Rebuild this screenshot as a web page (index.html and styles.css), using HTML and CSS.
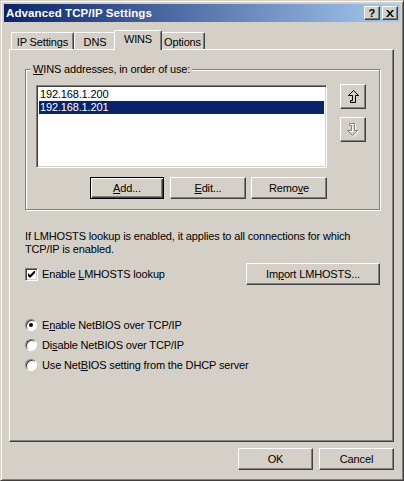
FILE: index.html
```html
<!DOCTYPE html>
<html lang="en">
<head>
  <meta charset="UTF-8" />
  <title>Advanced TCP/IP Settings</title>
  <link rel="stylesheet" href="styles.css">
</head>
<body>
  <div class="window">
    <div class="titlebar">
      <span class="title">Advanced TCP/IP Settings</span>
      <span class="caption-btn help">?</span>
      <span class="caption-btn close">
        <svg width="8" height="7" viewBox="0 0 8 7"><path d="M0 0h2l2 2.5L6 0h2L5 3.5 8 7H6L4 4.5 2 7H0l3-3.5z" fill="#000"/></svg>
      </span>
    </div>

    <div class="dialog">
      <div class="tabs">
        <div class="tab tab-ip">IP Settings</div>
        <div class="tab tab-dns">DNS</div>
        <div class="tab tab-wins active">WINS</div>
        <div class="tab tab-options">Options</div>
      </div>

      <div class="panel">
        <fieldset class="group">
          <legend><u>W</u>INS addresses, in order of use:</legend>
          <div class="group-row">
            <div class="listbox">
              <div class="item">192.168.1.200</div>
              <div class="item selected">192.168.1.201</div>
            </div>
            <div class="arrows">
              <button class="btn arrow">
                <svg width="11" height="13" viewBox="0 0 11 13"><path d="M5.5 0.5L10.5 5.5H7.5V12.5H2.5V10.5H4.5V5.5H0.5Z" fill="none" stroke="#000"/></svg>
              </button>
              <button class="btn arrow" disabled>
                <svg width="12" height="14" viewBox="0 0 12 14"><path d="M6.5 13.5L11.5 8.5H8.5V1.5H3.5V3.5H5.5V8.5H1.5Z" fill="none" stroke="#fff"/><path d="M5.5 12.5L10.5 7.5H7.5V0.5H2.5V2.5H4.5V7.5H0.5Z" fill="none" stroke="#808080"/></svg>
              </button>
            </div>
          </div>
          <div class="group-buttons">
            <button class="btn default btn-add"><u>A</u>dd...</button>
            <button class="btn btn-edit"><u>E</u>dit...</button>
            <button class="btn btn-remove">Remo<u>v</u>e</button>
          </div>
        </fieldset>

        <p class="note">If LMHOSTS lookup is enabled, it applies to all connections for which<br>TCP/IP is enabled.</p>

        <div class="lmhosts-row">
          <label class="option">
            <span class="checkbox">
              <svg width="7" height="7" viewBox="0 0 7 7"><path d="M0 2v3l2 2 5-5V-1L2 4z" fill="#000"/></svg>
            </span>
            <span>Enable <u>L</u>MHOSTS lookup</span>
          </label>
          <button class="btn btn-import">Im<u>p</u>ort LMHOSTS...</button>
        </div>

        <div class="radios">
          <label class="option"><span class="radio checked"></span><span>E<u>n</u>able NetBIOS over TCP/IP</span></label>
          <label class="option"><span class="radio"></span><span>Di<u>s</u>able NetBIOS over TCP/IP</span></label>
          <label class="option"><span class="radio"></span><span>Use Net<u>B</u>IOS setting from the DHCP server</span></label>
        </div>
      </div>

      <div class="footer">
        <button class="btn">OK</button>
        <button class="btn">Cancel</button>
      </div>
    </div>
  </div>
</body>
</html>
```

FILE: styles.css
```css
* {
  box-sizing: border-box;
}
body {
  margin: 0;
  font-family: 'Liberation Sans', Arial, sans-serif;
  font-size: 11px;
  letter-spacing: -0.15px;
  color: #000;
  background-color: #d4d0c8;
}
u {
  text-decoration: underline;
  text-underline-offset: 1px;
}

/* window frame */
.window {
  width: 404px;
  height: 481px;
  padding: 3px;
  background-color: #d4d0c8;
  border: 1px solid;
  border-color: #d4d0c8 #404040 #404040 #d4d0c8;
  box-shadow: inset 1px 1px #fff, inset -1px -1px #808080;
}
.titlebar {
  height: 18px;
  display: flex;
  align-items: center;
  padding: 0 2px 0 2px;
  background: linear-gradient(to right, #0a246a, #a6caf0);
  color: #fff;
  font-weight: bold;
  font-size: 11.5px;
  letter-spacing: 0.1px;
}
.title {
  flex: 1;
}
.caption-btn {
  width: 16px;
  height: 14px;
  display: flex;
  align-items: center;
  justify-content: center;
  background-color: #d4d0c8;
  color: #000;
  font-weight: bold;
  font-size: 11px;
  border: 1px solid;
  border-color: #fff #404040 #404040 #fff;
  box-shadow: inset -1px -1px #808080;
}
.caption-btn.close {
  margin-left: 2px;
}

.dialog {
  padding: 8px 6px 0 5px;
}

/* tab strip */
.tabs {
  display: flex;
  align-items: flex-end;
  height: 19px;
  padding-left: 2px;
}
.tab {
  height: 17px;
  display: flex;
  align-items: center;
  justify-content: center;
  border-top: 1px solid #fff;
  border-left: 1px solid #fff;
  border-right: 1px solid #404040;
  border-radius: 2px 2px 0 0;
  box-shadow: inset -1px 0 #808080;
  background-color: #d4d0c8;
  padding-top: 2px;
}
.tab-ip { width: 63px; }
.tab-dns { width: 42px; }
.tab-wins { width: 44px; }
.tab-options { width: 45px; }
.tab.active {
  position: relative;
  z-index: 1;
  height: 20px;
  margin: 0 -2px -1px;
  width: 48px;
  padding-top: 0;
  padding-bottom: 3px;
}

.panel {
  height: 393px;
  border: 1px solid;
  border-color: #fff #404040 #404040 #fff;
  box-shadow: inset -1px -1px #808080;
  padding: 0 13px 0 15px;
}

/* WINS group box */
.group {
  width: 355px;
  margin: 13px 0 0 0;
  padding: 9px 10px 10px 10px;
  border: 1px solid #808080;
  box-shadow: inset 1px 1px #fff, 1px 1px #fff;
}
.group legend {
  padding: 0 2px;
  margin-left: -5px;
  line-height: 13px;
  background-color: #d4d0c8;
}
.group-row {
  display: flex;
  gap: 13px;
}
.listbox {
  width: 291px;
  height: 83px;
  background-color: #fff;
  border: 1px solid;
  border-color: #808080 #fff #fff #808080;
  box-shadow: inset 1px 1px #404040, inset -1px -1px #d4d0c8;
  padding: 2px 2px;
}
.item {
  height: 13px;
  line-height: 13px;
  padding-left: 1px;
}
.item.selected {
  background-color: #0a246a;
  color: #fff;
}
.arrows {
  display: flex;
  flex-direction: column;
  gap: 8px;
  margin-top: -1px;
}

/* push buttons */
.btn {
  font-family: inherit;
  font-size: 11px;
  letter-spacing: inherit;
  color: #000;
  height: 22px;
  padding: 0;
  background-color: #d4d0c8;
  border: 1px solid;
  border-color: #fff #404040 #404040 #fff;
  box-shadow: inset -1px -1px #808080;
}
.btn.default {
  border-color: #000;
  box-shadow: inset 1px 1px #fff, inset -1px -1px #404040, inset -2px -2px #808080;
}
.btn.arrow {
  width: 26px;
  height: 25px;
  display: flex;
  align-items: center;
  justify-content: center;
}
.group-buttons {
  width: 291px;
  display: flex;
  justify-content: flex-end;
  margin-top: 9px;
}
.btn-add { width: 74px; }
.btn-edit { width: 76px; margin-left: 6px; }
.btn-remove { width: 76px; margin-left: 5px; }

.note {
  margin: 20px 0 0 0;
  line-height: 13px;
}

.lmhosts-row {
  width: 355px;
  display: flex;
  align-items: center;
  justify-content: space-between;
  margin-top: 7px;
}
.btn-import {
  width: 134px;
}
.option {
  display: flex;
  align-items: center;
  gap: 4px;
}
.checkbox {
  width: 13px;
  height: 13px;
  display: flex;
  align-items: center;
  justify-content: center;
  background-color: #fff;
  border: 1px solid;
  border-color: #808080 #fff #fff #808080;
  box-shadow: inset 1px 1px #404040, inset -1px -1px #d4d0c8;
}

.radios {
  margin-top: 30px;
}
.radios .option {
  height: 20px;
  gap: 5px;
}
.radio {
  width: 12px;
  height: 12px;
  border-radius: 50%;
  background-color: #fff;
  border: 1px solid;
  border-color: #808080 #fff #fff #808080;
  box-shadow: inset 1px 1px #404040;
  display: flex;
  align-items: center;
  justify-content: center;
}
.radio.checked::after {
  content: "";
  width: 4px;
  height: 4px;
  border-radius: 50%;
  background-color: #000;
}

.footer {
  display: flex;
  justify-content: flex-end;
  gap: 6px;
  margin-top: 6px;
}
.footer .btn {
  width: 75px;
}
```
